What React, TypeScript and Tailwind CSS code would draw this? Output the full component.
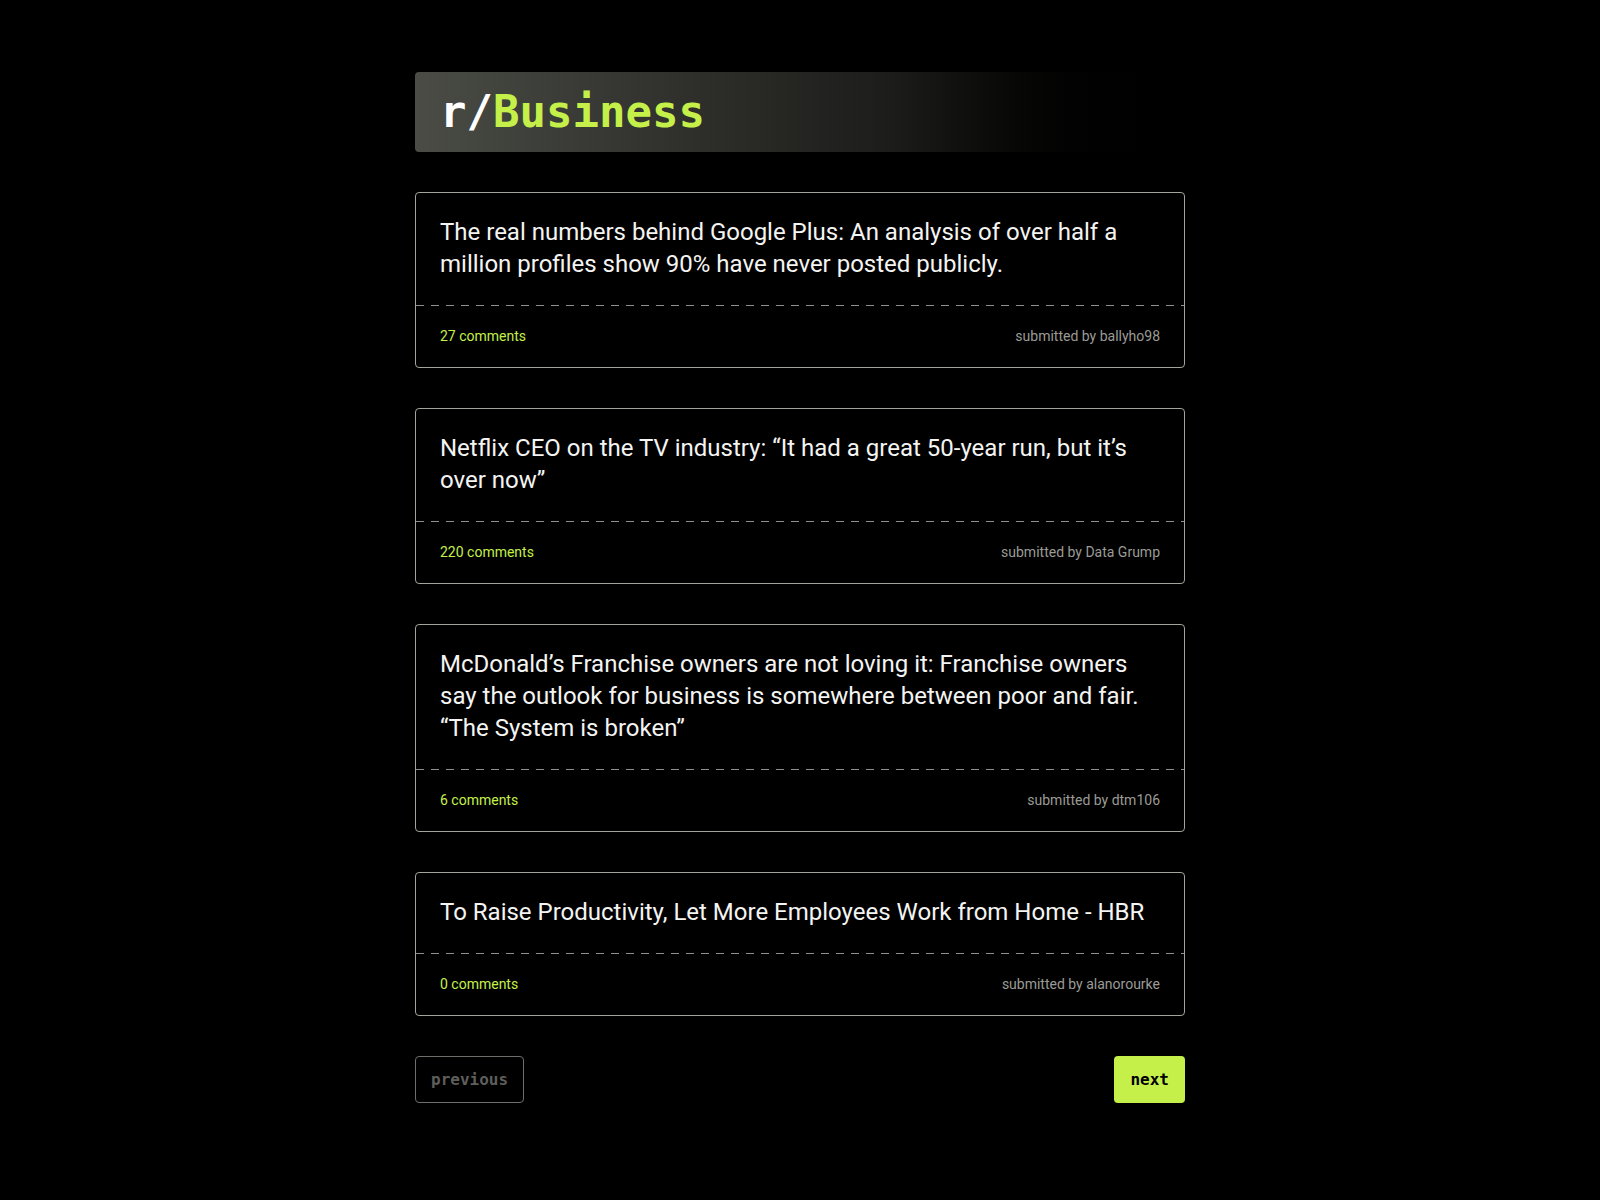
const posts = [
  {
    title:
      "The real numbers behind Google Plus: An analysis of over half a million profiles show 90% have never posted publicly.",
    comments: "27 comments",
    author: "ballyho98",
  },
  {
    title: "Netflix CEO on the TV industry: \u201cIt had a great 50-year run, but it\u2019s over now\u201d",
    comments: "220 comments",
    author: "Data Grump",
  },
  {
    title:
      "McDonald\u2019s Franchise owners are not loving it: Franchise owners say the outlook for business is somewhere between poor and fair. \u201cThe System is broken\u201d",
    comments: "6 comments",
    author: "dtm106",
  },
  {
    title: "To Raise Productivity, Let More Employees Work from Home - HBR",
    comments: "0 comments",
    author: "alanorourke",
  },
];

interface IPost {
  title: string;
  comments: string;
  author: string;
}

const PostCard = (prop: IPost) => (
  <div className="flex flex-col border border-[#a3a39c] rounded-[4px]">
    <p className="px-6 pt-[23px] pb-[25px] text-[24px] leading-[32px] text-[#f4f4f2]">{prop.title}</p>
    <div className="h-px bg-[repeating-linear-gradient(to_right,#8f8f8a_0_8px,transparent_8px_15px)]"></div>
    <div className="flex justify-between items-center px-6 pt-5 pb-[21px] text-[14px] leading-[20px]">
      <span className="text-[#c5f04a]">{prop.comments}</span>
      <span className="text-[#9b9b96]">submitted by {prop.author}</span>
    </div>
  </div>
);

export default function App() {
  return (
    <div className="min-h-[1200px] bg-black font-['Roboto',sans-serif]">
      <div className="w-[770px] mx-auto pt-[72px] pb-20 flex flex-col gap-10">
        <div className="h-20 rounded-[4px] flex items-center px-[25px] bg-linear-to-r from-[#4a4c45] via-[#1c1c1a] via-[62%] to-black">
          <h1 className="font-['DejaVu_Sans_Mono',monospace] font-bold text-[44px] leading-none">
            <span className="text-white">r/</span>
            <span className="text-[#c5f04a]">Business</span>
          </h1>
        </div>
        {posts.map((p, i) => (
          <PostCard key={i} title={p.title} comments={p.comments} author={p.author} />
        ))}
        <div className="flex justify-between">
          <button className="h-[47px] px-[15px] border border-[#6e6e6a] rounded-[4px] font-['DejaVu_Sans_Mono',monospace] font-bold text-[16px] text-[#5e5e5b]">
            previous
          </button>
          <button className="h-[47px] px-4 bg-[#c5f04a] rounded-[4px] font-['DejaVu_Sans_Mono',monospace] font-bold text-[16px] text-black">
            next
          </button>
        </div>
      </div>
    </div>
  );
}
